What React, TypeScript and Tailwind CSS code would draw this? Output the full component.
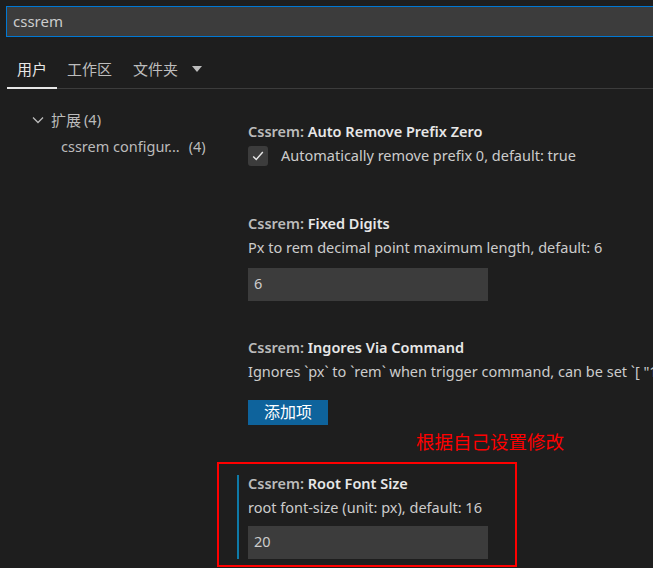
import React from "react";

const font = { fontFamily: '"Noto Sans", "Noto Sans CJK SC", sans-serif' };

function Title({ name }: { name: string }) {
  return (
    <div className="h-[20px] leading-[20px] text-[14.5px] font-semibold whitespace-nowrap">
      <span className="text-[#bbbbbb]">Cssrem: </span>
      <span className="text-[#e7e7e7]">{name}</span>
    </div>
  );
}

function Desc({ children }: { children: React.ReactNode }) {
  return (
    <div className="mt-[4px] h-[20px] leading-[20px] text-[14.5px] text-[#cccccc] whitespace-nowrap">
      {children}
    </div>
  );
}

function Input({ value }: { value: string }) {
  return (
    <div className="w-[240px] h-[33px] bg-[#3c3c3c] flex items-center pl-[6px] text-[14.5px] text-[#cccccc]">
      {value}
    </div>
  );
}

export default function App() {
  return (
    <div
      className="w-[653px] h-[568px] bg-[#1e1e1e] overflow-hidden flex flex-col"
      style={font}
    >
      {/* search */}
      <div className="pt-[6px] pl-[6px]">
        <div className="w-[660px] h-[31px] border border-[#0078d4] bg-[#3c3c3c] flex items-center pl-[6px] text-[15px] text-[#cccccc]">
          cssrem
        </div>
      </div>

      {/* tabs */}
      <div className="mt-[22px] flex items-end">
        <div className="ml-[7px] w-[50px] shrink-0 flex flex-col items-center">
          <div className="h-[20px] leading-[20px] text-[15px] text-[#e7e7e7]">用户</div>
          <div className="mt-[8px] h-[2px] w-full bg-[#e7e7e7]" />
        </div>
        <div className="flex-1 flex flex-col">
          <div className="flex items-center h-[20px] text-[15px] text-[#bdbdbd]">
            <span className="ml-[10px]">工作区</span>
            <span className="ml-[21px]">文件夹</span>
            <svg width="10" height="6" viewBox="0 0 10 6" className="ml-[14px]">
              <path d="M0 0 L10 0 L5 6 Z" fill="#bdbdbd" />
            </svg>
          </div>
          <div className="mt-[9px] h-[1px] w-full bg-[#3c3c3c]" />
        </div>
      </div>

      {/* body */}
      <div className="flex">
        {/* sidebar */}
        <div className="w-[217px] shrink-0 pt-[21px]">
          <div className="flex items-center h-[20px] text-[14.5px] text-[#bbbbbb]">
            <svg width="12" height="8" viewBox="0 0 12 8" className="ml-[32px]">
              <path d="M1 1.5 L6 6.5 L11 1.5" stroke="#bbbbbb" strokeWidth="1.3" fill="none" />
            </svg>
            <span className="ml-[7px] text-[15px]">扩展</span>
            <span className="ml-[3px]">(4)</span>
          </div>
          <div className="mt-[7px] flex items-center h-[20px] text-[14.5px] text-[#bbbbbb] whitespace-nowrap">
            <span className="ml-[61px]">cssrem configur...</span>
            <span className="ml-[9px]">(4)</span>
          </div>
        </div>

        {/* content */}
        <div className="flex-1 min-w-0 overflow-hidden flex flex-col">
          <div className="pl-[31px] pt-[32px]">
            <Title name="Auto Remove Prefix Zero" />
            <div className="mt-[4px] flex items-center">
              <div className="w-[20px] h-[20px] rounded-[3px] bg-[#3c3c3c] flex items-center justify-center">
                <svg width="14" height="14" viewBox="0 0 16 16">
                  <path d="M2.5 8.5 L6 12 L13.5 3.5" stroke="#e7e7e7" strokeWidth="1.6" fill="none" />
                </svg>
              </div>
              <span className="ml-[13px] text-[14.5px] text-[#cccccc] whitespace-nowrap">
                Automatically remove prefix 0, default: true
              </span>
            </div>
          </div>

          <div className="pl-[31px] mt-[46px]">
            <Title name="Fixed Digits" />
            <Desc>Px to rem decimal point maximum length, default: 6</Desc>
            <div className="mt-[11px]">
              <Input value="6" />
            </div>
          </div>

          <div className="pl-[31px] mt-[36px]">
            <Title name="Ingores Via Command" />
            <Desc>Ignores `px` to `rem` when trigger command, can be set `[ "1px", "0.5px" ]`</Desc>
            <div className="mt-[19px] w-[80px] h-[25px] bg-[#0e639c] flex items-center justify-center text-[16px] text-white">
              添加项
            </div>
          </div>

          <div className="ml-[199px] mt-[4px] h-[25px] leading-[25px] text-[18.5px] text-[#ff0000] whitespace-nowrap">
            根据自己设置修改
          </div>

          <div className="mt-[8px] w-[300px] h-[105px] border-2 border-[#ff0000] flex">
            <div className="ml-[18px] mt-[11px] w-[2px] h-[84px] bg-[#0e7aa8]" />
            <div className="ml-[9px] pt-[9px] flex flex-col">
              <Title name="Root Font Size" />
              <Desc>root font-size (unit: px), default: 16</Desc>
              <div className="mt-[9px]">
                <Input value="20" />
              </div>
            </div>
          </div>
        </div>
      </div>
    </div>
  );
}
